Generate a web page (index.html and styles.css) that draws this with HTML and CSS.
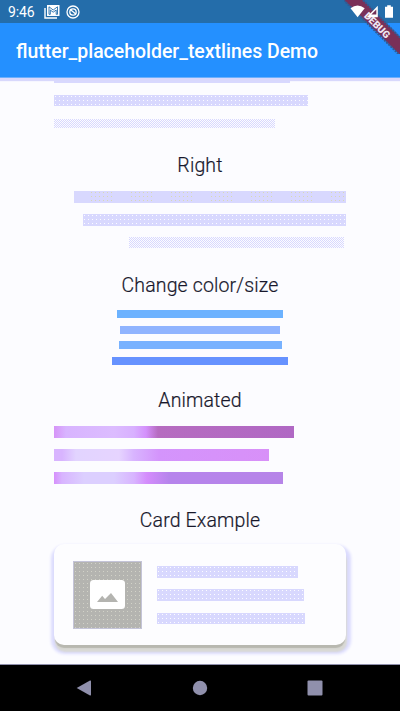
FILE: index.html
```html
<!DOCTYPE html>
<html lang="en">
<head>
<meta charset="utf-8">
<title>flutter_placeholder_textlines Demo</title>
<link rel="stylesheet" href="styles.css">
</head>
<body>
<div class="phone">
  <header class="status">
    <span class="clock">9:46</span>
    <svg class="mail" viewBox="0 0 16 14"><path d="M1 3v10h12" fill="none" stroke="#fff" stroke-width="1.400"/><path d="M3 0h12.500v11H3z" fill="#fff"/><path d="M5 1.800v7.500h1.300V5L9.200 7.200 12.200 5v4.300h1.300V1.800L9.200 5z" fill="#fff" stroke="#246daa" stroke-width=".9"/></svg>
    <svg class="round" viewBox="0 0 14 14"><circle cx="7" cy="7" r="6" fill="none" stroke="#fff" stroke-width="1.300"/><circle cx="7" cy="7" r="3.200" fill="none" stroke="#fff" stroke-width="1.300"/><path d="M4 4.300l6 5" stroke="#fff" stroke-width="1.300"/></svg>
    <span class="fill"></span>
    <svg class="signals" viewBox="0 0 46 14">
      <path d="M.5 3.200Q7.500-2 14.700 3.200L7.600 12.300z" fill="#fff"/>
      <path d="M27.800.8V12.200H16.600z" fill="#fff"/><path d="M26.300 4.500v5h-5z" fill="#722e56"/>
      <path d="M35 1.700h2.200V.3h3.600v1.400H43v11.100h-8z" fill="#fff"/>
    </svg>
  </header>
  <div class="appbar"><h1>flutter_placeholder_textlines Demo</h1></div>
  <svg class="debug" viewBox="0 0 56 54">
    <path d="M0 0h19L56 37v18z" fill="#7a3058"/>
    <path d="M-.5 0L56 55.500M19 0L56 37.500" stroke="#315b93" stroke-width="2" stroke-dasharray="2 1"/>
    <text x="0" y="0" transform="translate(19.500 16.500) rotate(45)" textLength="32">DEBUG</text>
  </svg>
  <main class="list">
    <div class="lines left"><i class="bar l1"></i><i class="bar l2 dots"></i><i class="bar l3 mesh"></i></div>
    <h2 class="t-right">Right</h2>
    <div class="lines right"><i class="bar r1 specks"></i><i class="bar r2 dots"></i><i class="bar r3 mesh"></i></div>
    <h2 class="t-color">Change color/size</h2>
    <div class="lines center"><i class="bar c1"></i><i class="bar c2"></i><i class="bar c3"></i><i class="bar c4"></i></div>
    <h2 class="t-anim">Animated</h2>
    <div class="lines left anim"><i class="bar a1"></i><i class="bar a2"></i><i class="bar a3"></i></div>
    <h2 class="t-card">Card Example</h2>
    <section class="card">
      <div class="thumb"><svg viewBox="0 0 35 29"><rect width="35" height="29" rx="3.500" fill="#fff"/><path d="M7 22l5.200-6.200 2.800 3.200L21 13l7 9z" fill="#b4b4b0"/></svg></div>
      <div class="lines left"><i class="bar k1 dots"></i><i class="bar k2 dots"></i><i class="bar k3 dots"></i></div>
    </section>
  </main>
  <nav class="nav">
    <svg viewBox="0 0 16 16"><path d="M.7 8L14 .5q1-.4 1 .7v13.600q0 1.100-1 .7z"/></svg>
    <svg viewBox="0 0 16 16"><circle cx="8" cy="8" r="7.200"/></svg>
    <svg viewBox="0 0 16 16"><rect x=".5" y=".5" width="15" height="15" rx="1"/></svg>
  </nav>
</div>
</body>
</html>
```
FILE: styles.css
```css
* { box-sizing: border-box; }
body { margin: 0; background: #fcfcff; font-family: Roboto, "Liberation Sans", sans-serif; }
.phone { position: relative; width: 400px; height: 711px; overflow: hidden; display: flex; flex-direction: column; }
svg { display: block; }
.status { flex: none; height: 23px; background: #246daa; color: #fff; display: flex; align-items: center; padding: 0 7px 0 8px; }
.clock { font-size: 14px; line-height: 23px; width: 36px; padding-top: 1px; letter-spacing: -0.1px; }
.mail { width: 16px; height: 14px; }
.round { width: 14px; height: 14px; margin-left: 6px; }
.fill { flex: 1; }
.signals { position: relative; z-index: 3; width: 46px; height: 14px; margin-right: -3px; }
.appbar { flex: none; height: 55px; background: #2490ff; border-bottom: 1px solid #6cb0fc; display: flex; align-items: center; padding: 3px 0 0 16px; position: relative; z-index: 1; box-shadow: 0 3px 1px #d8d8fc; }
h1 { margin: 0; color: #fff; font-size: 19.45px; font-weight: 500; line-height: 24px; white-space: nowrap; }
.debug { position: absolute; z-index: 2; right: 0; top: 0; width: 56px; height: 54px; }
.debug text { fill: #eee8f4; font-family: Roboto, sans-serif; font-size: 10px; font-weight: 900; }
.list { flex: 1; min-height: 0; padding: 0 54px; background: #fcfcff; }
h2 { margin: 0; color: #18182c; -webkit-text-stroke: 0.2px #18182c; font-size: 19.500px; font-weight: 300; line-height: 24px; text-align: center; white-space: nowrap; letter-spacing: 0.14px; }
.lines { display: flex; flex-direction: column; gap: 11px; }
.left { align-items: flex-start; }
.right { align-items: flex-end; }
.bar { display: block; height: 12px; background-color: #d8d8fe; }
.dots { background-image: radial-gradient(circle at 1.5px 1.5px, #fcfcff 0.6px, transparent 0.7px); background-size: 4px 4px; }
.specks { background-image: linear-gradient(90deg, #d8d8fe 15px, transparent 15px), radial-gradient(circle at 1.5px 1.5px, #d8d8b4 0.6px, transparent 0.7px); background-size: 40px 12px, 4px 4px; }
.mesh { background-color: #fcfcff; background-image: radial-gradient(circle at 0.5px 0.5px, #d8d8fe 0.6px, transparent 0.7px), radial-gradient(circle at 1.5px 1.5px, #d8d8fe 0.6px, transparent 0.7px); background-size: 2px 2px; }
.l1 { width: 236px; height: 5px; margin-bottom: 1px; }
.l2 { width: 254px; height: 11px; margin-bottom: 2px; }
.l3 { width: 221px; height: 9px; }
.t-right { margin-top: 26px; }
.lines.right { margin-top: 13px; }
.r1 { width: 272px; }
.r2 { width: 263px; }
.r3 { width: 215px; height: 11px; margin-right: 2px; }
.t-color { margin-top: 26px; }
.center { align-items: center; margin-top: 12px; gap: 7.670px; }
.center .bar { height: 8px; }
.c1 { width: 166px; background: #6cb2ff; }
.c2 { width: 160px; background: #90b4ff; }
.c3 { width: 163px; background: #78b2ff; }
.c4 { width: 176px; background: #6692ff; }
.t-anim { margin-top: 24px; }
.anim { margin-top: 13px; }
.a1 { width: 240px; background: linear-gradient(90deg, #d694f8, #d8b4ff 12px, #dcbcff 60px, #d8b0ff 80px, #d490fc 92px, #b66cc0 104px, #b068c4); }
.a2 { width: 215px; background: linear-gradient(90deg, #d8b4ff 8px, #e2d4ff 22px, #e6d4ff 65px, #d8b4ff 80px, #d494fc 105px, #d890f8); }
.a3 { width: 229px; background: linear-gradient(90deg, #d690fc, #d8b4ff 8px, #dccfff 30px, #dccfff 60px, #d8b4ff 80px, #d48cfc 93px, #b684ec 115px, #b684e8); }
.t-card { margin-top: 25px; }
.card { height: 101px; margin-top: 11px; border-radius: 10px; background: #fdfdff; display: flex; padding: 17px 0 0 19px; gap: 15px; box-shadow: 0 4px 1px -1px #b8b8b0, 1px 7px 2px #d8d8d4, 1px 5px 3px 4px #dcdcfe; }
.thumb { width: 69px; height: 68px; background-color: #b4b4b0; border: 1px solid #c4c4d8; display: flex; justify-content: center; align-items: center; background-image: radial-gradient(circle at 1.5px 1.5px, #d2d2c8 0.6px, transparent 0.7px); background-size: 4px 4px; }
.thumb svg { width: 35px; height: 29px; }
.card .lines { padding-top: 5px; gap: 11.500px; }
.k1 { width: 141px; }
.k2 { width: 147px; }
.k3 { width: 148px; height: 11px; }
.nav { flex: none; height: 47px; background: #000; border-top: 1px solid #9090ac; display: flex; align-items: center; justify-content: space-between; padding: 0 77px 0 76px; position: relative; z-index: 1; }
.nav svg { width: 16px; height: 16px; fill: #9090ac; }
```
